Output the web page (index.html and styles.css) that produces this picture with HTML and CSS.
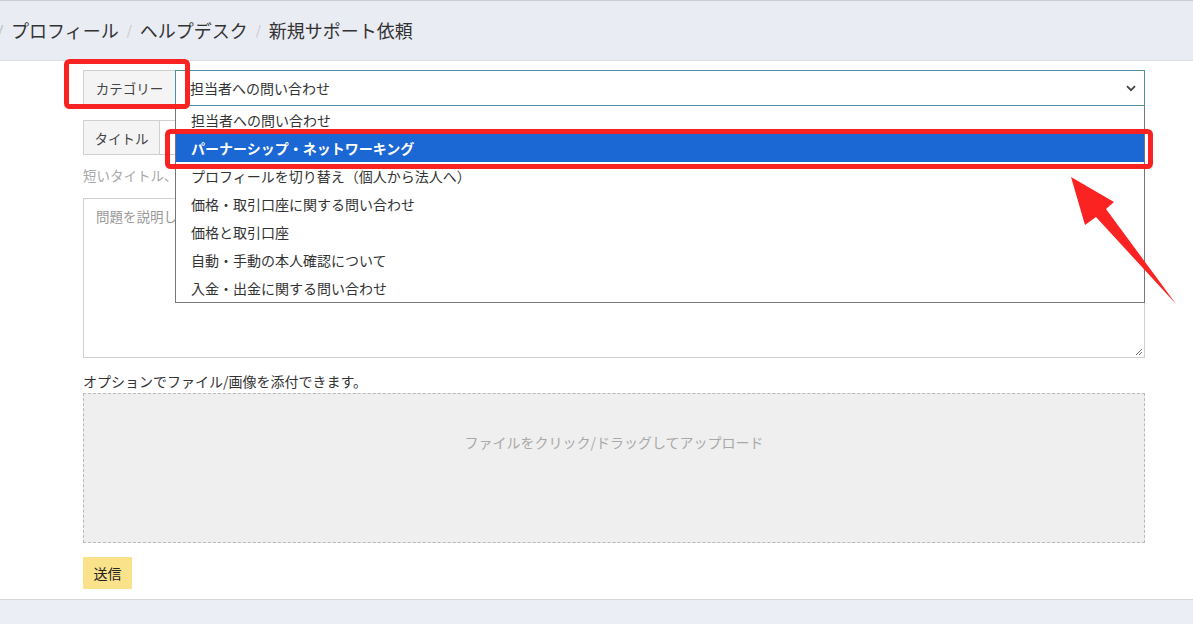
FILE: index.html
```html
<!DOCTYPE html>
<html lang="ja">
<head>
<meta charset="utf-8">
<title>新規サポート依頼</title>
<link rel="stylesheet" href="styles.css">
</head>
<body>
<header class="topbar">
  <nav class="crumbs">
    <span class="cutmark"></span>
    <span class="crumb">プロフィール</span>
    <span class="sep">/</span>
    <span class="crumb">ヘルプデスク</span>
    <span class="sep">/</span>
    <span class="crumb">新規サポート依頼</span>
  </nav>
</header>

<main class="page">
  <div class="form">
    <div class="group cat-group">
      <span class="addon">カテゴリー</span>
      <div class="select">
        <span class="select-text">担当者への問い合わせ</span>
        <svg class="chev" width="10" height="7" viewBox="0 0 10 7"><path d="M1 1.2 L5 5.2 L9 1.2" fill="none" stroke="#444" stroke-width="1.8"/></svg>
      </div>
      <ul class="options">
        <li>担当者への問い合わせ</li>
        <li class="active">パーナーシップ・ネットワーキング</li>
        <li>プロフィールを切り替え（個人から法人へ）</li>
        <li>価格・取引口座に関する問い合わせ</li>
        <li>価格と取引口座</li>
        <li>自動・手動の本人確認について</li>
        <li>入金・出金に関する問い合わせ</li>
      </ul>
    </div>

    <div class="group title-group">
      <span class="addon">タイトル</span>
      <div class="input"></div>
    </div>
    <p class="help">短いタイトル、</p>

    <div class="textarea">
      <span class="placeholder">問題を説明し</span>
      <svg class="grip" width="9" height="9" viewBox="0 0 9 9"><path d="M8 2 L2 8 M8 5 L5 8" stroke="#777" stroke-width="1"/></svg>
    </div>

    <p class="label">オプションでファイル/画像を添付できます。</p>
    <div class="dropzone">ファイルをクリック/ドラッグしてアップロード</div>

    <button class="submit">送信</button>
  </div>
</main>

<footer class="foot"></footer>

<svg class="annot" width="1193" height="624" viewBox="0 0 1193 624">
  <rect x="66.5" y="61.5" width="121" height="45" rx="3" fill="none" stroke="#fb2222" stroke-width="5"/>
  <rect x="167.5" y="131.5" width="983" height="35" rx="3" fill="none" stroke="#fb2222" stroke-width="5"/>
  <polygon points="1071,177 1114,202 1106,209 1176,304 1096,217 1085,225" fill="#fb2222"/>
</svg>
</body>
</html>
```

FILE: styles.css
```css
* { box-sizing: border-box; }
html, body { margin: 0; padding: 0; }
body {
  width: 1193px;
  height: 624px;
  overflow: hidden;
  position: relative;
  background: #fff;
  font-family: "Noto Sans CJK JP", "Noto Sans", sans-serif;
  color: #333;
  display: flex;
  flex-direction: column;
}

.topbar {
  height: 61px;
  background: #e9ecf3;
  border-top: 1px solid #c9ccd2;
  border-bottom: 1px solid #d9dde4;
  display: flex;
  align-items: center;
  flex-shrink: 0;
}
.crumbs {
  display: flex;
  align-items: center;
  font-size: 18px;
  color: #333;
  padding-bottom: 2px;
}
.cutmark {
  width: 2px;
  height: 9px;
  background: #c9ccd2;
  margin: 0 9px 0 0;
  transform: skewX(-20deg);
}
.sep {
  color: #c3c6cc;
  font-size: 13px;
  margin: 0 8px;
}

.page { flex: 1; }
.form {
  margin: 9px 48px 0 83px;
  display: flex;
  flex-direction: column;
  align-items: stretch;
}

.group {
  display: flex;
  position: relative;
}
.addon {
  display: flex;
  align-items: center;
  justify-content: center;
  white-space: nowrap;
  padding: 0;
  flex-shrink: 0;
  background: #f4f4f4;
  border: 1px solid #d0d0d0;
  font-size: 13.5px;
  color: #444;
}
.cat-group { height: 36px; }
.cat-group .addon { width: 92px; border-right: none; }
.select {
  flex: 1;
  display: flex;
  align-items: center;
  justify-content: space-between;
  border: 1px solid #4e8fa6;
  padding: 0 8px 0 14px;
  font-size: 14px;
  color: #333;
  background: #fff;
}
.chev { margin-top: 1px; }

.options {
  position: absolute;
  left: 92px;
  right: 0;
  top: 36px;
  margin: 0;
  padding: 0;
  list-style: none;
  border: 1px solid #767676;
  border-top: none;
  background: #fff;
  z-index: 5;
}
.options li {
  height: 28px;
  line-height: 28px;
  padding-left: 15px;
  font-size: 14px;
  color: #333;
}
.options li.active {
  background: #1b67d3;
  color: #fff;
  font-weight: 700;
}

.title-group { height: 35px; margin-top: 14px; }
.title-group .addon { width: 77px; }
.input {
  flex: 1;
  border: 1px solid #d0d0d0;
  border-left: none;
}

.help {
  margin: 11px 0 0;
  font-size: 13.5px;
  color: #a8a8a8;
  line-height: 18px;
}

.textarea {
  margin-top: 14px;
  height: 160px;
  border: 1px solid #d0d0d0;
  position: relative;
  padding: 7px 12px;
  font-size: 13.5px;
  color: #999;
}
.grip { position: absolute; right: 1px; bottom: 1px; }

.label {
  margin: 14px 0 0;
  font-size: 14px;
  line-height: 18px;
  color: #333;
}

.dropzone {
  margin-top: 3px;
  height: 150px;
  background: #efefef;
  border: 1px dashed #b8b8b8;
  display: flex;
  justify-content: center;
  padding-top: 38px;
  font-size: 14px;
  color: #a9a9a9;
}

.submit {
  align-self: flex-start;
  margin-top: 14px;
  width: 49px;
  height: 32px;
  background: #fae28b;
  border: none;
  border-radius: 1px;
  font-family: inherit;
  font-size: 14px;
  color: #222;
  padding: 0;
}

.foot {
  height: 25px;
  background: #ebeef5;
  border-top: 1px solid #d5d8de;
  flex-shrink: 0;
}

.annot {
  position: absolute;
  left: 0;
  top: 0;
  pointer-events: none;
  z-index: 10;
}
```
